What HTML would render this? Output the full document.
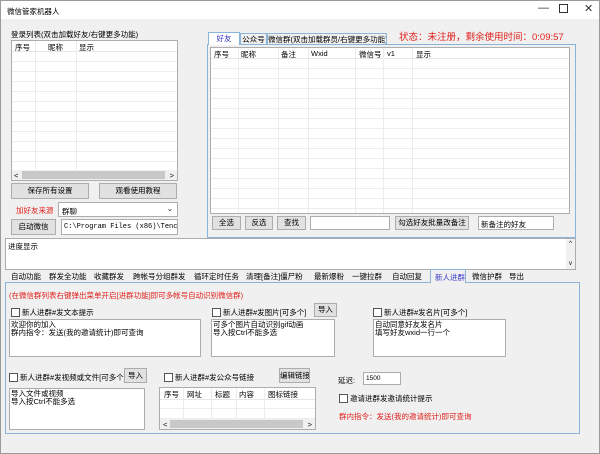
<!DOCTYPE html>
<html><head><meta charset="utf-8"><style>
*{box-sizing:border-box;margin:0;padding:0;white-space:nowrap}
body{width:600px;height:454px;background:#f0f0f0;font-family:"Liberation Sans","Noto Sans CJK SC",sans-serif;font-size:7.5px;color:#000;position:relative;overflow:hidden;border:1px solid #9a9a9a}
.a{position:absolute}
.box{position:absolute;background:#fff;border:1px solid #adadad;overflow:hidden}
.btn{position:absolute;background:#e1e1e1;border:1px solid #adadad;text-align:center;overflow:hidden}
.red{color:#e0201c}
.cb{display:inline-block;width:9px;height:9px;border:1px solid #555;background:#fff;vertical-align:-2px;margin-right:2px}
.hdr{position:absolute;left:0;right:0;top:0;height:11px;border-bottom:1px solid #e6e6e6}
.hdr span{position:absolute;top:1px}
.vl{position:absolute;top:0;bottom:0;width:1px;background:#ececec}
.grid{position:absolute;left:0;right:0;top:11px;bottom:0;background:repeating-linear-gradient(#fff 0 9px,#ededed 9px 10px)}
.tab{position:absolute;top:270px;height:12px}
.ta{line-height:7.5px;padding:1px}
</style></head><body>
<div class="a" style="left:0;top:0;width:598px;height:18px;background:#fff"></div>
<div class="a" style="left:6px;top:5px">微信管家机器人</div>
<div class="a" style="left:537px;top:1px;font-size:11px;color:#333">—</div>
<div class="a" style="left:558px;top:3px;width:9px;height:9px;border:1px solid #333"></div>
<div class="a" style="left:583px;top:1px;font-size:11px;color:#333">✕</div>

<div class="a" style="left:10px;top:28px">登录列表(双击加载好友/右键更多功能)</div>
<div class="box" style="left:10px;top:39px;width:167px;height:141px">
<div class="grid" style="bottom:10px"></div>
<div class="hdr"><span style="left:3px">序号</span><span style="left:36px">昵称</span><span style="left:67px">显示</span></div>
<div class="vl" style="left:23px;bottom:10px"></div><div class="vl" style="left:64px;bottom:10px"></div>
<div class="a" style="left:0;right:0;bottom:0;height:10px;background:#f0f0f0"></div>
<div class="a" style="left:10px;width:143px;bottom:1px;height:8px;background:#c8c8c8"></div>
<div class="a" style="left:2px;bottom:0">&lt;</div><div class="a" style="right:3px;bottom:0">&gt;</div>
</div>
<div class="btn" style="left:10px;top:182px;width:78px;height:16px;line-height:14px">保存所有设置</div>
<div class="btn" style="left:98px;top:182px;width:78px;height:16px;line-height:14px">观看使用教程</div>
<div class="a red" style="left:15px;top:204px">加好友来源</div>
<div class="box" style="left:57px;top:201px;width:120px;height:15px;padding:3px 3px">群聊<span style="position:absolute;right:4px;top:1px">⌄</span></div>
<div class="btn" style="left:10px;top:218px;width:45px;height:16px;line-height:14px">启动微信</div>
<div class="box" style="left:60px;top:218px;width:117px;height:16px;padding:3px 2px;font-family:'Liberation Mono',monospace;font-size:7px">C:\Program Files (x86)\Tencent\We</div>

<div class="a" style="left:207px;top:31px;width:32px;height:13px;border:1px solid #8ab4d9;border-bottom:none;background:#fff;color:#3a3acc;text-align:center;line-height:12px;z-index:2">好友</div>
<div class="a" style="left:239px;top:32px;width:27px;height:12px;border:1px solid #8ab4d9;text-align:center;line-height:11px">公众号</div>
<div class="a" style="left:266px;top:32px;width:120px;height:12px;border:1px solid #8ab4d9;text-align:center;line-height:11px;overflow:hidden">微信群(双击加载群员/右键更多功能)</div>
<div class="a red" style="left:398px;top:28px;font-size:9.5px">状态：未注册，剩余使用时间：0:09:57</div>
<div class="a" style="left:206px;top:43px;width:369px;height:194px;border:1px solid #8ab4d9;background:#f0f0f0"></div>
<div class="box" style="left:209px;top:46px;width:360px;height:167px">
<div class="grid"></div>
<div class="hdr"><span style="left:3px">序号</span><span style="left:30px">昵称</span><span style="left:70px">备注</span><span style="left:100px">Wxid</span><span style="left:148px">微信号</span><span style="left:176px">v1</span><span style="left:205px">显示</span></div>
<div class="vl" style="left:27px"></div><div class="vl" style="left:67px"></div><div class="vl" style="left:97px"></div><div class="vl" style="left:144px"></div><div class="vl" style="left:172px"></div><div class="vl" style="left:201px"></div>
</div>
<div class="btn" style="left:211px;top:215px;width:29px;height:14px;line-height:12px">全选</div>
<div class="btn" style="left:244px;top:215px;width:28px;height:14px;line-height:12px">反选</div>
<div class="btn" style="left:276px;top:215px;width:29px;height:14px;line-height:12px">查找</div>
<div class="box" style="left:309px;top:215px;width:80px;height:14px"></div>
<div class="btn" style="left:394px;top:215px;width:74px;height:14px;line-height:12px">勾选好友批量改备注</div>
<div class="box" style="left:477px;top:215px;width:76px;height:14px;padding:2px 2px">新备注的好友</div>

<div class="box" style="left:4px;top:237px;width:571px;height:32px;padding:2px 2px">进度显示<div class="a" style="right:0;top:0;bottom:0;width:9px;background:#f0f0f0;font-size:6px;text-align:center;line-height:10px">^<br>&nbsp;<br>v</div></div>

<div class="a" style="left:4px;top:281px;width:575px;height:152px;border:1px solid #8ab4d9;background:#f0f0f0"></div>
<div class="tab" style="left:10px">自动功能</div>
<div class="tab" style="left:48px">群发全功能</div>
<div class="tab" style="left:93px">收藏群发</div>
<div class="tab" style="left:132px">跨帐号分组群发</div>
<div class="tab" style="left:193px">循环定时任务</div>
<div class="tab" style="left:245px">清理[备注]僵尸粉</div>
<div class="tab" style="left:313px">最新爆粉</div>
<div class="tab" style="left:351px">一键拉群</div>
<div class="tab" style="left:391px">自动回复</div>
<div class="tab" style="left:429px;top:268px;width:36px;height:14px;background:#f0f0f0;border:1px solid #8ab4d9;border-bottom:none;color:#3a3acc;padding:2px 0 0 4px;z-index:2">新人进群</div>
<div class="tab" style="left:471px">微信护群</div>
<div class="tab" style="left:508px">导出</div>

<div class="a red" style="left:8px;top:289px">(在微信群列表右键弹出菜单开启[进群功能]即可多帐号自动识别微信群)</div>
<div class="a" style="left:10px;top:306px"><span class="cb"></span>新人进群#发文本提示</div>
<div class="box ta" style="left:8px;top:318px;width:192px;height:38px">欢迎你的加入<br>群内指令：发送(我的邀请统计)即可查询</div>
<div class="a" style="left:211px;top:306px"><span class="cb"></span>新人进群#发图片[可多个]</div>
<div class="btn" style="left:313px;top:302px;width:23px;height:14px;line-height:12px">导入</div>
<div class="box ta" style="left:210px;top:318px;width:124px;height:38px">可多个图片自动识别gif动画<br>导入按Ctrl不能多选</div>
<div class="a" style="left:372px;top:306px"><span class="cb"></span>新人进群#发名片[可多个]</div>
<div class="box ta" style="left:372px;top:318px;width:133px;height:38px">自动同意好友发名片<br>填写好友wxid一行一个</div>

<div class="a" style="left:8px;top:371px"><span class="cb"></span>新人进群#发视频或文件[可多个]</div>
<div class="btn" style="left:123px;top:367px;width:23px;height:15px;line-height:13px">导入</div>
<div class="a" style="left:163px;top:371px"><span class="cb"></span>新人进群#发公众号链接</div>
<div class="btn" style="left:278px;top:367px;width:31px;height:15px;line-height:13px">编辑链接</div>
<div class="a" style="left:337px;top:374px">延迟:</div>
<div class="box" style="left:362px;top:371px;width:38px;height:13px;font-size:6.5px;padding:2px">1500</div>
<div class="box ta" style="left:8px;top:387px;width:136px;height:42px">导入文件或视频<br>导入按Ctrl不能多选</div>
<div class="box" style="left:158px;top:386px;width:157px;height:43px">
<div class="grid" style="bottom:10px"></div>
<div class="hdr" style="height:12px"><span style="left:4px">序号</span><span style="left:27px">网址</span><span style="left:55px">标题</span><span style="left:79px">内容</span><span style="left:108px">图标链接</span></div>
<div class="vl" style="left:23px;bottom:10px"></div><div class="vl" style="left:51px;bottom:10px"></div><div class="vl" style="left:76px;bottom:10px"></div><div class="vl" style="left:104px;bottom:10px"></div>
<div class="a" style="left:0;right:0;bottom:0;height:10px;background:#f0f0f0"></div>
<div class="a" style="left:10px;right:12px;bottom:1px;height:8px;background:#c8c8c8"></div>
<div class="a" style="left:3px;bottom:0">&lt;</div><div class="a" style="right:3px;bottom:0">&gt;</div>
</div>
<div class="a" style="left:338px;top:392px"><span class="cb"></span>邀请进群发邀请统计提示</div>
<div class="a red" style="left:338px;top:410px">群内指令：发送(我的邀请统计)即可查询</div>
</body></html>
